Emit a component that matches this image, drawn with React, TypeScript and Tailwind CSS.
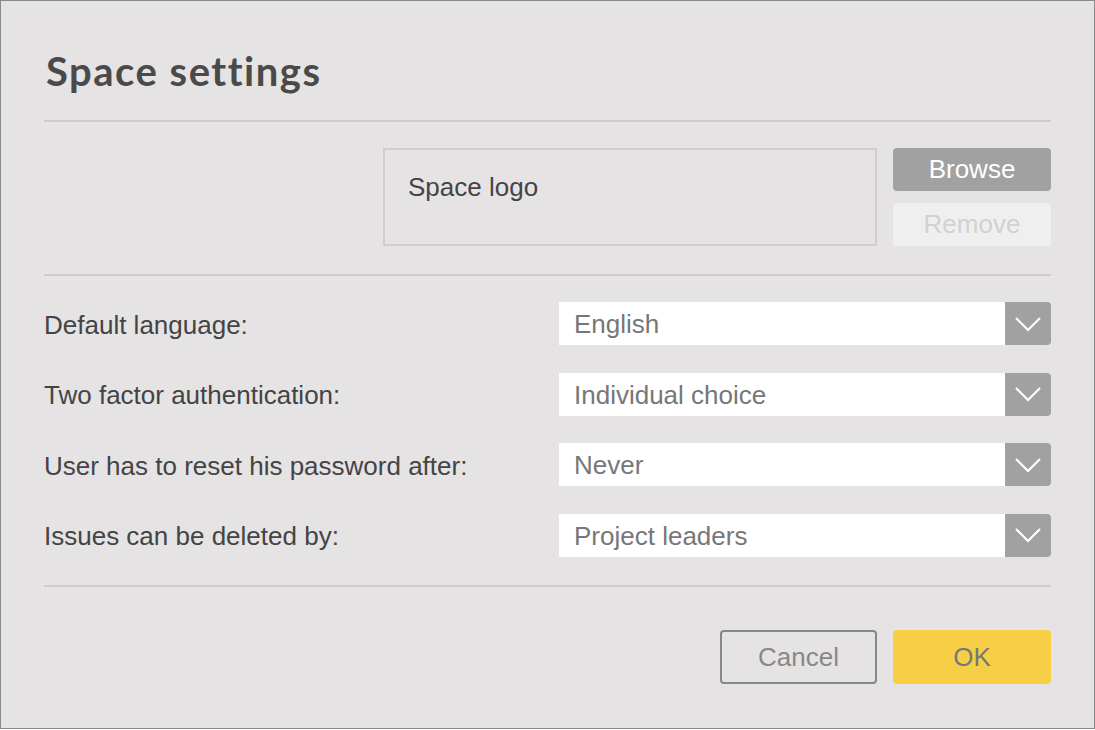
import { ReactNode } from "react";

const rows = [
  { label: "Default language:", value: "English" },
  { label: "Two factor authentication:", value: "Individual choice" },
  { label: "User has to reset his password after:", value: "Never" },
  { label: "Issues can be deleted by:", value: "Project leaders" },
];

function Chevron() {
  return (
    <svg width="28" height="18" viewBox="0 0 28 18" fill="none">
      <path d="M2 3 L14 15 L26 3" stroke="white" strokeWidth="2.2" />
    </svg>
  );
}

function Select({ value }: { value: string }) {
  return (
    <div className="flex h-[43px] w-[492px] items-stretch">
      <div className="flex flex-1 items-center bg-white pb-[1px] pl-[15px] pt-[3px] text-[26px] text-[#777]">{value}</div>
      <div className="flex w-[46px] items-center justify-center rounded-r-[4px] bg-[#a1a1a1]">
        <Chevron />
      </div>
    </div>
  );
}

function Divider() {
  return <div className="h-[2px] w-full bg-[#cdcbcc]" />;
}

function Row({ label, children }: { label: string; children: ReactNode }) {
  return (
    <div className="flex items-center justify-between">
      <span className="pt-[3px] text-[26px] text-[#444]">{label}</span>
      {children}
    </div>
  );
}

export default function App() {
  return (
    <div
      className="h-[729px] w-[1095px] border border-[#8a8a8a] bg-[#e5e3e4] pl-[43px] pr-[43px]"
      style={{ fontFamily: '"Liberation Sans", Arial, sans-serif' }}
    >
      <div className="flex h-[119px] items-center pt-[20px]">
        <h1
          className="pl-[2px] text-[40px] font-bold tracking-[1.5px] text-[#4a4a4a]"
          style={{ fontFamily: 'Lato, "Open Sans", sans-serif' }}
        >
          Space settings
        </h1>
      </div>
      <Divider />

      <div className="flex justify-end gap-4 pt-[26px] pb-[28px]">
        <div className="flex h-[98px] w-[494px] items-start border-2 border-[#cfcdce] pl-[23px] pt-[18px] text-[26px] text-[#444]">
          Space logo
        </div>
        <div className="flex w-[158px] flex-col gap-[12px]">
          <button className="h-[43px] rounded-[4px] bg-[#a1a1a1] text-[26px] text-white">Browse</button>
          <button className="h-[43px] rounded-[4px] bg-[#efefef] text-[26px] text-[#d1d1d1]">Remove</button>
        </div>
      </div>
      <Divider />

      <div className="flex flex-col gap-[27.5px] pt-[26px] pb-[28px]">
        {rows.map((r) => (
          <Row key={r.label} label={r.label}>
            <Select value={r.value} />
          </Row>
        ))}
      </div>
      <Divider />

      <div className="flex justify-end gap-4 pt-[43px]">
        <button className="h-[54px] w-[157px] rounded-[4px] border-2 border-[#888] pt-[2px] text-[26px] text-[#888]">
          Cancel
        </button>
        <button className="h-[54px] w-[158px] rounded-[4px] bg-[#f6cf47] pt-[2px] text-[26px] text-[#777]">OK</button>
      </div>
    </div>
  );
}
